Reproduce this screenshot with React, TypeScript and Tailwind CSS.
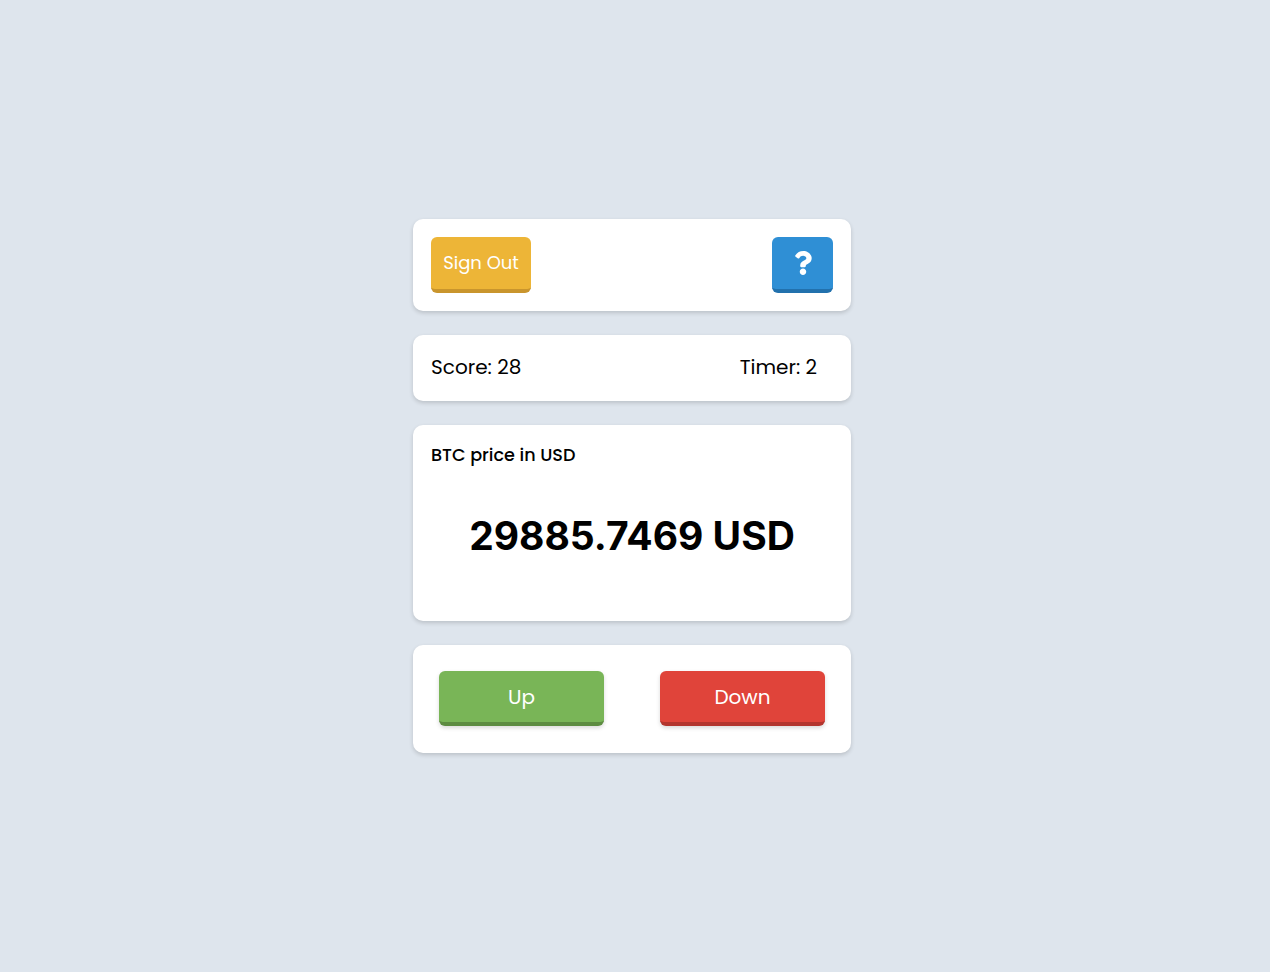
import React from 'react';
import { FaQuestion } from 'react-icons/fa';

const Card: React.FC<{ className?: string; children: React.ReactNode }> = ({ className = '', children }) => (
  <div className={`bg-white rounded-[10px] shadow-[0_2px_4px_rgba(0,0,0,0.16)] ${className}`}>{children}</div>
);

const App: React.FC = () => {
  const score = 28;
  const timer = 2;
  const price = '29885.7469';

  return (
    <div className="min-h-screen w-full bg-[#dee5ed] flex items-center justify-center pr-[6px] font-['Poppins','Inter',sans-serif] text-black">
      <div className="w-[438px] flex flex-col gap-6">
        {/* Top bar */}
        <Card className="p-[18px] flex items-center justify-between">
          <button className="h-[56px] w-[100px] rounded-[6px] bg-[#edb537] border-b-4 border-[#c9952d] text-white text-[18px] font-normal pb-[2px]">
            Sign Out
          </button>
          <button
            aria-label="Help"
            className="h-[56px] w-[61px] rounded-[6px] bg-[#2f8fd5] border-b-4 border-[#2271ad] text-white flex items-center justify-center"
          >
            <FaQuestion className="w-[18px] h-[26px]" />
          </button>
        </Card>

        {/* Score / timer */}
        <Card className="px-[18px] h-[66px] flex items-center justify-between text-[20px] pb-[2px]">
          <span>Score: {score}</span>
          <span className="pr-[16px]">Timer: {timer}</span>
        </Card>

        {/* Price */}
        <Card className="p-[18px] flex flex-col">
          <div className="text-[17.6px] leading-6 font-medium">BTC price in USD</div>
          <div className="h-[136px] flex items-center justify-center text-[39px] font-bold font-['Inter',sans-serif] pt-[2px]">
            {price} USD
          </div>
        </Card>

        {/* Guess */}
        <Card className="px-[26px] pt-[26px] pb-[27px] flex items-center justify-between">
          <button className="h-[55px] w-[165px] rounded-[6px] bg-[#79b557] border-b-4 border-[#5d8c41] text-white text-[20px] font-normal shadow-[0_2px_4px_rgba(0,0,0,0.15)]">
            Up
          </button>
          <button className="h-[55px] w-[165px] rounded-[6px] bg-[#e0443a] border-b-4 border-[#b3352e] text-white text-[20px] font-normal shadow-[0_2px_4px_rgba(0,0,0,0.15)]">
            Down
          </button>
        </Card>
      </div>
    </div>
  );
};

export default App;
